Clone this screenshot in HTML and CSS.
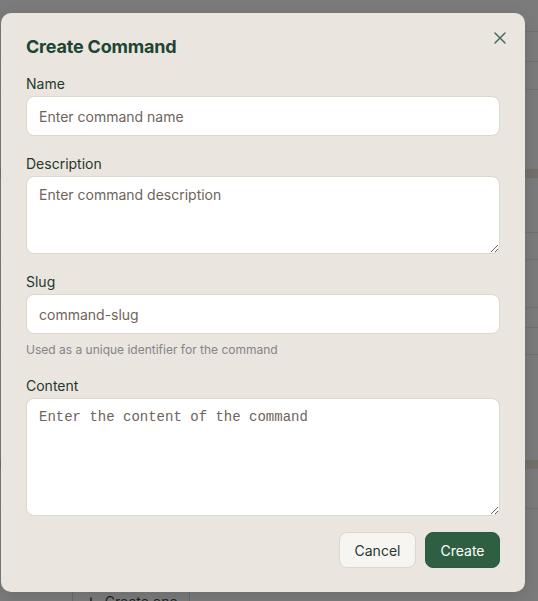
FILE: index.html
```html
<!DOCTYPE html>
<html lang="en">
<head>
    <meta charset="UTF-8">
    <title>Create Command</title>
    <link rel="stylesheet" href="styles.css">
</head>
<body>
<div class="page">
    <div class="row" style="height: 32px"></div>
    <div class="row" style="height: 30px"></div>
    <div class="row" style="height: 28px"></div>
    <div class="row" style="height: 80px"></div>
    <div class="band"></div>
    <div class="row" style="height: 55px"></div>
    <div class="row" style="height: 27px"></div>
    <div class="row" style="height: 48px"></div>
    <div class="row" style="height: 20px"></div>
    <div class="row" style="height: 27px"></div>
    <div class="row" style="height: 106px"></div>
    <div class="band"></div>
    <div class="row" style="height: 40px"></div>
    <div class="row last" style="height: 82px"></div>
    <div class="add-row">
        <span class="add-btn"><span class="plus">+</span> Create one</span>
    </div>
</div>

<!-- 弹窗 -->
<div class="dialog">
    <button class="close" aria-label="Close">
        <svg width="12" height="12" viewBox="0 0 12 12">
            <path d="M1 1 L11 11 M11 1 L1 11" stroke="currentColor" stroke-width="1.5" stroke-linecap="round"/>
        </svg>
    </button>
    <h2 class="title">Create Command</h2>

    <div class="fields">
        <div class="field">
            <label class="label">Name</label>
            <input class="input" type="text" placeholder="Enter command name">
        </div>
        <div class="field">
            <label class="label">Description</label>
            <textarea class="input area-desc" placeholder="Enter command description"></textarea>
        </div>
        <div class="field">
            <label class="label">Slug</label>
            <input class="input" type="text" placeholder="command-slug">
            <p class="help">Used as a unique identifier for the command</p>
        </div>
        <div class="field">
            <label class="label">Content</label>
            <textarea class="input area-content" placeholder="Enter the content of the command"></textarea>
        </div>
    </div>

    <div class="actions">
        <button class="btn btn-cancel">Cancel</button>
        <button class="btn btn-create">Create</button>
    </div>
</div>
</body>
</html>
```

FILE: styles.css
```css
* {
    margin: 0;
    padding: 0;
    box-sizing: border-box;
}

body {
    background-color: #7b7b7b;
    font-family: Inter, "Noto Sans", sans-serif;
    overflow: hidden;
}

/* 底层页面（被遮罩） */
.page {
    width: 100%;
    height: 601px;
    overflow: hidden;
}

.row {
    border-bottom: 1px solid #6f6f6f;
}

.row.last {
    border-bottom: none;
}

.band {
    height: 8px;
    background-color: #727068;
}

.add-row {
    padding-left: 72px;
}

.add-btn {
    display: inline-block;
    width: 118px;
    height: 30px;
    border-left: 1px solid #6a6a6a;
    border-right: 1px solid #6a6a6a;
    padding: 0 12px;
    font-size: 14px;
    color: #222;
    line-height: 20px;
    white-space: nowrap;
}

.plus {
    font-size: 18px;
    margin-right: 4px;
}

/* 弹窗 */
.dialog {
    position: absolute;
    left: 1px;
    top: 13px;
    width: 524px;
    height: 579px;
    background-color: #eae6df;
    border-radius: 10px;
    padding: 22px 25px 24px 25px;
    box-shadow: 0 4px 16px rgba(0, 0, 0, 0.12);
}

.close {
    position: absolute;
    top: 19px;
    right: 19px;
    width: 12px;
    height: 12px;
    border: none;
    background: none;
    color: #4c6a5a;
    display: flex;
}

.title {
    font-size: 18px;
    font-weight: 700;
    line-height: 24px;
    color: #1e4433;
    margin-bottom: 15px;
    letter-spacing: -0.2px;
}

.fields {
    display: flex;
    flex-direction: column;
    gap: 18px;
}

.field {
    display: flex;
    flex-direction: column;
    gap: 2px;
}

.label {
    font-size: 14px;
    line-height: 20px;
    color: #24382c;
    font-weight: 400;
}

.input {
    width: 100%;
    height: 40px;
    border: 1px solid #dcd6cb;
    border-radius: 8px;
    background-color: #ffffff;
    padding: 0 12px;
    font-family: Inter, "Noto Sans", sans-serif;
    font-size: 14px;
    color: #2a2a2a;
    outline: none;
}

.input::placeholder {
    color: #6e645c;
}

textarea.input {
    padding: 8px 12px;
    line-height: 20px;
    resize: vertical;
}

.area-desc {
    height: 78px;
}

.area-content {
    height: 118px;
    font-family: "Liberation Mono", monospace;
}

.help {
    margin-top: 6px;
    font-size: 12px;
    line-height: 16px;
    color: #86828a;
}

.actions {
    display: flex;
    justify-content: flex-end;
    gap: 9px;
    margin-top: 16px;
}

.btn {
    height: 36px;
    border-radius: 8px;
    font-family: Inter, "Noto Sans", sans-serif;
    font-size: 14px;
    font-weight: 400;
    padding: 0 14px;
}

.btn-cancel {
    width: 77px;
    background-color: #f7f5f2;
    border: 1px solid #ddd7cc;
    color: #26392d;
}

.btn-create {
    width: 75px;
    background-color: #2f5f43;
    border: 1px solid #2b5a3f;
    color: #ffffff;
}
```
